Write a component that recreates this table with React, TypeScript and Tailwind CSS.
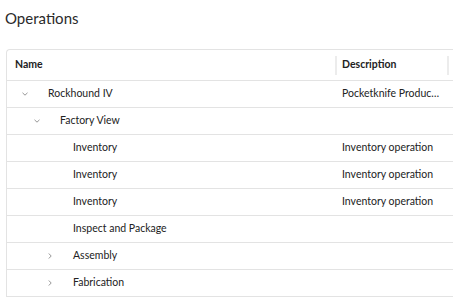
import React from "react";

type Row = {
  name: string;
  description?: string;
  level: 0 | 1 | 2;
  toggle?: "open" | "closed";
};

const rows: Row[] = [
  { name: "Rockhound IV", description: "Pocketknife Produc\u2026", level: 0, toggle: "open" },
  { name: "Factory View", level: 1, toggle: "open" },
  { name: "Inventory", description: "Inventory operation", level: 2 },
  { name: "Inventory", description: "Inventory operation", level: 2 },
  { name: "Inventory", description: "Inventory operation", level: 2 },
  { name: "Inspect and Package", level: 2 },
  { name: "Assembly", level: 2, toggle: "closed" },
  { name: "Fabrication", level: 2, toggle: "closed" },
];

const indent = ["pl-[10px]", "pl-[22px]", "pl-[35px]"];

function Chevron({ open }: { open: boolean }) {
  return (
    <svg width="8" height="8" viewBox="0 0 8 8" fill="none" className="text-[#8a8a8a]">
      {open ? (
        <polyline points="1.5,2.8 4,5.2 6.5,2.8" stroke="currentColor" strokeWidth="0.9" />
      ) : (
        <polyline points="2.8,1.5 5.2,4 2.8,6.5" stroke="currentColor" strokeWidth="0.9" />
      )}
    </svg>
  );
}

export default function App() {
  return (
    <div
      className="w-[453px] h-[306px] overflow-hidden bg-white text-[#222]"
      style={{ fontFamily: "Lato, 'Noto Sans', sans-serif" }}
    >
      <div className="pl-[5px] pt-[6px] h-[30px] text-[15px] leading-[24px] text-[#2a2a2a]">Operations</div>
      <div className="ml-[6px] mt-[19px] w-[560px] border-l border-t border-[#e3e3e3] rounded-tl-[4px]">
        <div className="grid grid-cols-[328px_112px_1fr] h-[31px] border-b border-[#e3e3e3] text-[10.5px] font-bold items-center">
          <div className="pl-[8px]">Name</div>
          <div className="flex items-center h-full">
            <div className="w-[2px] h-[19px] bg-[#ececec]" />
            <span className="pl-[5px]">Description</span>
          </div>
          <div className="flex items-center h-full">
            <div className="w-[2px] h-[19px] bg-[#ececec]" />
          </div>
        </div>
        {rows.map((r, i) => (
          <div
            key={i}
            className="grid grid-cols-[328px_112px_1fr] h-[27px] border-b border-[#e3e3e3] text-[10.5px] items-center"
          >
            <div className={`flex items-center ${indent[r.level]}`}>
              <div className="w-[16px] flex justify-center">
                {r.toggle ? <Chevron open={r.toggle === "open"} /> : null}
              </div>
              <span className="ml-[15px]">{r.name}</span>
            </div>
            <div className="pl-[7px] whitespace-nowrap">{r.description ?? ""}</div>
            <div />
          </div>
        ))}
      </div>
    </div>
  );
}
